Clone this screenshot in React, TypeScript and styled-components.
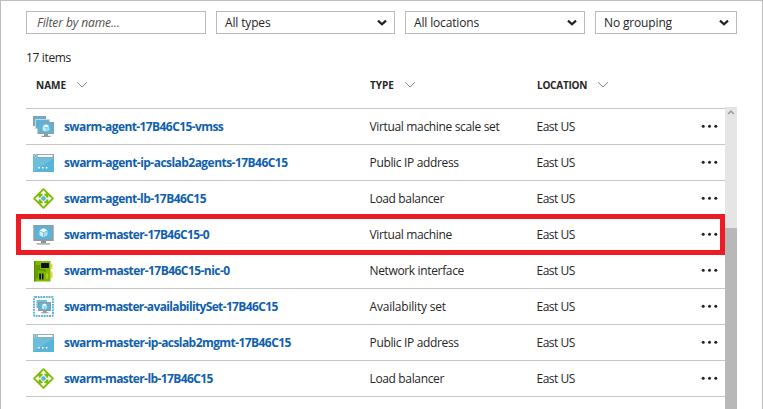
import React from 'react';
import styled, { createGlobalStyle, css } from 'styled-components';

const GlobalStyle = createGlobalStyle`
  *, *::before, *::after { box-sizing: border-box; }
  body { margin: 0; background: #fff; }
  input, button { font: inherit; }
`;

const Blade = styled.main`
  width: 763px;
  height: 409px;
  overflow: hidden;
  border: 1px solid #bdbdbd;
  border-bottom: 0;
  padding: 10px 25px 0;
  color: #262626;
  background: #fff;
  font: 12px/16px 'Open Sans', 'Noto Sans', sans-serif;
`;

const Filters = styled.div`
  display: grid;
  grid-template-columns: 180px 179px 180px 142px;
  column-gap: 10px;
  height: 23px;
`;

const fieldBox = css`
  height: 23px;
  border: 1px solid #bababa;
  border-radius: 0;
  background: #fff;
`;

const FilterInput = styled.input`
  ${fieldBox}
  width: 100%;
  padding: 0 10px 1px;
  outline: 0;
  font-style: italic;
  letter-spacing: -0.1px;
  &::placeholder { color: #505050; opacity: 1; }
`;

const Select = styled.button`
  ${fieldBox}
  display: flex;
  align-items: center;
  justify-content: space-between;
  padding: 0 7px 0 8px;
  color: #262626;
`;

const Label = styled.span<{ $spacing?: number }>`
  letter-spacing: ${(p) => p.$spacing ?? 0}px;
  white-space: nowrap;
`;

const Count = styled.div`
  margin-top: 16px;
  height: 16px;
  letter-spacing: -0.35px;
`;

const Columns = styled.div`
  display: grid;
  align-items: center;
`;

const Header = styled(Columns)`
  grid-template-columns: 334px 167px 1fr;
  padding-left: 10px;
  height: 41px;
  padding-bottom: 3px;
  font-size: 10px;
  font-weight: 700;
`;

const HeaderCell = styled.div`
  display: flex;
  align-items: center;
  gap: 10px;
`;

const ListArea = styled.div`
  display: flex;
  height: 302px;
`;

const Rows = styled.div`
  width: 699px;
  padding-top: 1px;
`;

const Row = styled(Columns)<{ $marked?: boolean }>`
  position: relative;
  height: 36px;
  border-top: 1px solid #c6c6c6;
  padding: 1px 0 0 7px;
  grid-template-columns: 31px 305.5px 167px 1fr 24.5px;
  ${(p) =>
    p.$marked &&
    css`
      &::after {
        content: '';
        position: absolute;
        inset: -3px 0 -3px -10px;
        border: 5px solid #ed1c24;
        z-index: 1;
      }
    `}
`;

const LastRule = styled.div`
  height: 1px;
  background: #c6c6c6;
`;

const Name = styled(Label)`
  color: #0f5fae;
  font-weight: 700;
`;

const Scrollbar = styled.div`
  width: 12px;
  display: flex;
  flex-direction: column;
  background: #e5e5e5;
`;

const ScrollTrack = styled.div`
  height: 121px;
  display: flex;
  justify-content: center;
  padding-top: 3px;
`;

const ScrollThumb = styled.div`
  flex: 1;
  background: #b8b8b8;
`;

const Graphic = styled.svg`
  display: block;
  flex: none;
`;

const SelectArrow = () => (
  <Graphic width="10" height="8" viewBox="0 0 10 8">
    <path d="M1 1.6 5 5.2 9 1.6" fill="none" stroke="#222" strokeWidth="2.2" />
  </Graphic>
);
const SortArrow = () => (
  <Graphic width="12" height="8" viewBox="0 0 12 8">
    <path d="M1 1.2 6 6 11 1.2" fill="none" stroke="#888" strokeWidth="1" />
  </Graphic>
);
const Dots = () => (
  <Graphic width="17" height="6" viewBox="0 0 17 6">
    <g fill="#222">
      <circle cx="2.2" cy="2.2" r="1.5" />
      <circle cx="8.5" cy="2.2" r="1.5" />
      <circle cx="14.8" cy="2.2" r="1.5" />
    </g>
  </Graphic>
);

const Cube = ({ x, y, s = 1 }: { x: number; y: number; s?: number }) => (
  <g transform={`translate(${x} ${y}) scale(${s})`}>
    <path d="M0-4.5 4-2.5 0-.5-4-2.5Z" fill="#fff" />
    <path d="M-4-1.8-.3 0V4.5L-4 2.5Z" fill="#d3edf7" />
    <path d="M4-1.8.3 0V4.5L4 2.5Z" fill="#aadcee" />
  </g>
);

type Kind = 'vmss' | 'ip' | 'lb' | 'vm' | 'nic' | 'set';

const drawings: Record<Kind, React.ReactNode> = {
  vmss: (
    <>
      <path d="M0 0h13v10H0Z" fill="#929da2" />
      <path d="M1 1h11v8H1Z" fill="#59b4d9" />
      <path d="M2 3h15v10H2Z" fill="#c9d5da" />
      <path d="M3 4h13v8H3Z" fill="#59b4d9" />
      <path d="M4.5 6H21v12H4.5Z" fill="#929da2" />
      <path d="M5.5 7H20v10H5.5Z" fill="#59b4d9" />
      <path d="M11 18h4v1.7h2.5V21h-9v-1.3H11Z" fill="#929a9e" />
      <Cube x={13} y={12} s={0.85} />
    </>
  ),
  ip: (
    <>
      <path d="M0 2h21v18H0Z" fill="#59b4d9" />
      <path d="M0 2h21v4H0Z" fill="#8fadb9" />
      <path d="M5 3h14.5v2H5Z" fill="#fff" />
      <circle cx="2.8" cy="4" r="1.4" fill="#59b4d9" stroke="#d3edf7" strokeWidth=".5" />
      <path d="M0 6h21L0 20Z" fill="#fff" opacity=".12" />
      <path d="M5.2 15h1.6v1.6H5.2Zm3.8 0h1.6v1.6H9Zm3.8 0h1.6v1.6h-1.6Z" fill="#fff" />
    </>
  ),
  lb: (
    <>
      <path
        d="m10.5 1.3 9.2 9.2-9.2 9.2-9.2-9.2Z"
        fill="#7fba00"
        stroke="#7fba00"
        strokeWidth="2"
        strokeLinejoin="round"
      />
      <path d="M10.5 5v11M5 10.5h11" stroke="#fff" strokeWidth="1.6" />
      <path
        d="m10.5 2.2 3.1 3.5H7.4Zm0 16.6-3.1-3.5h6.2ZM2.2 10.5l3.5-3.1v6.2Zm16.6 0-3.5 3.1V7.4Z"
        fill="#fff"
      />
      <circle cx="10.5" cy="10.5" r="2.8" fill="#59b4d9" stroke="#fff" strokeWidth=".9" />
    </>
  ),
  vm: (
    <>
      <path d="M.3 1h20.4v16H.3Z" fill="#929a9e" />
      <path d="M1.8 2.3h17.4v12.9H1.8Z" fill="#59b4d9" />
      <path d="M8 17h5v2h4v1.5H3.7V19H8Z" fill="#8c9194" />
      <path d="M3.7 19.3H17v1.2H3.7Z" fill="#c3c8ca" />
      <Cube x={10.5} y={8.7} />
    </>
  ),
  nic: (
    <>
      <path d="M17.5 3.5h2V9h-2Zm0 8h2V18h-2Z" fill="#fcd116" />
      <path d="M1 1h16.5v20.5H1Z" fill="#7fba00" />
      <path d="M1 1h1.6v20.5H1Z" fill="#598c00" />
      <path d="M4 5v13M6 5v5h6v2" fill="none" stroke="#4f7d00" strokeWidth="1" />
      <path d="M8 3h8v5H8Z" fill="#111" />
      <path d="M6.2 13.5h1.8v6H6.2Zm2.7 0h1.6v6H8.9Z" fill="#111" />
      <path d="M13.3 13.5h1.6v5h-1.6Z" fill="#b8d432" />
    </>
  ),
  set: (
    <>
      <rect x="1" y="1" width="19" height="19" rx="1" fill="none" stroke="#59b4d9" strokeWidth="1.9" strokeDasharray="1.9 .8" />
      <path d="M3.5 4H14v8H3.5Z" fill="#7cb9d2" />
      <path d="M5 6h13v9H5Z" fill="#929a9e" />
      <path d="M6 7h11v7H6Z" fill="#59b4d9" />
      <path d="M10 15h3.5v1.2h2v1H8v-1h2Z" fill="#929a9e" />
      <Cube x={11.5} y={10.5} s={0.65} />
    </>
  ),
};

const ResourceIcon = ({ kind }: { kind: Kind }) => (
  <Graphic width="21" height="22" viewBox="0 0 21 22">
    {drawings[kind]}
  </Graphic>
);

interface Resource {
  kind: Kind;
  name: string;
  nameSpacing: number;
  type: string;
  typeSpacing: number;
  marked?: boolean;
}

const resources: Resource[] = [
  { kind: 'vmss', name: 'swarm-agent-17B46C15-vmss', nameSpacing: -0.59, type: 'Virtual machine scale set', typeSpacing: -0.34 },
  { kind: 'ip', name: 'swarm-agent-ip-acslab2agents-17B46C15', nameSpacing: -0.54, type: 'Public IP address', typeSpacing: -0.34 },
  { kind: 'lb', name: 'swarm-agent-lb-17B46C15', nameSpacing: -0.55, type: 'Load balancer', typeSpacing: -0.35 },
  { kind: 'vm', name: 'swarm-master-17B46C15-0', nameSpacing: -0.6, type: 'Virtual machine', typeSpacing: -0.35, marked: true },
  { kind: 'nic', name: 'swarm-master-17B46C15-nic-0', nameSpacing: -0.55, type: 'Network interface', typeSpacing: -0.35 },
  { kind: 'set', name: 'swarm-master-availabilitySet-17B46C15', nameSpacing: -0.64, type: 'Availability set', typeSpacing: -0.2 },
  { kind: 'ip', name: 'swarm-master-ip-acslab2mgmt-17B46C15', nameSpacing: -0.57, type: 'Public IP address', typeSpacing: -0.34 },
  { kind: 'lb', name: 'swarm-master-lb-17B46C15', nameSpacing: -0.6, type: 'Load balancer', typeSpacing: -0.35 },
];

export default function App() {
  return (
    <>
      <GlobalStyle />
      <Blade>
        <Filters>
          <FilterInput placeholder="Filter by name..." />
          {['All types', 'All locations', 'No grouping'].map((text) => (
            <Select key={text}>
              <Label $spacing={-0.15}>{text}</Label>
              <SelectArrow />
            </Select>
          ))}
        </Filters>
        <Count>17 items</Count>
        <Header>
          {['NAME', 'TYPE', 'LOCATION'].map((text) => (
            <HeaderCell key={text}>
              <Label $spacing={text === 'LOCATION' ? -0.25 : 0}>{text}</Label>
              <SortArrow />
            </HeaderCell>
          ))}
        </Header>
        <ListArea>
          <Rows>
            {resources.map((r) => (
              <Row key={r.name} $marked={r.marked}>
                <ResourceIcon kind={r.kind} />
                <Name $spacing={r.nameSpacing}>{r.name}</Name>
                <Label $spacing={r.typeSpacing}>{r.type}</Label>
                <Label $spacing={-0.5}>East US</Label>
                <Dots />
              </Row>
            ))}
            <LastRule />
          </Rows>
          <Scrollbar>
            <ScrollTrack>
              <Graphic width="8" height="6" viewBox="0 0 8 6">
                <path d="M1 4 4 1.3 7 4" fill="none" stroke="#999" strokeWidth="1.5" />
              </Graphic>
            </ScrollTrack>
            <ScrollThumb />
          </Scrollbar>
        </ListArea>
      </Blade>
    </>
  );
}
